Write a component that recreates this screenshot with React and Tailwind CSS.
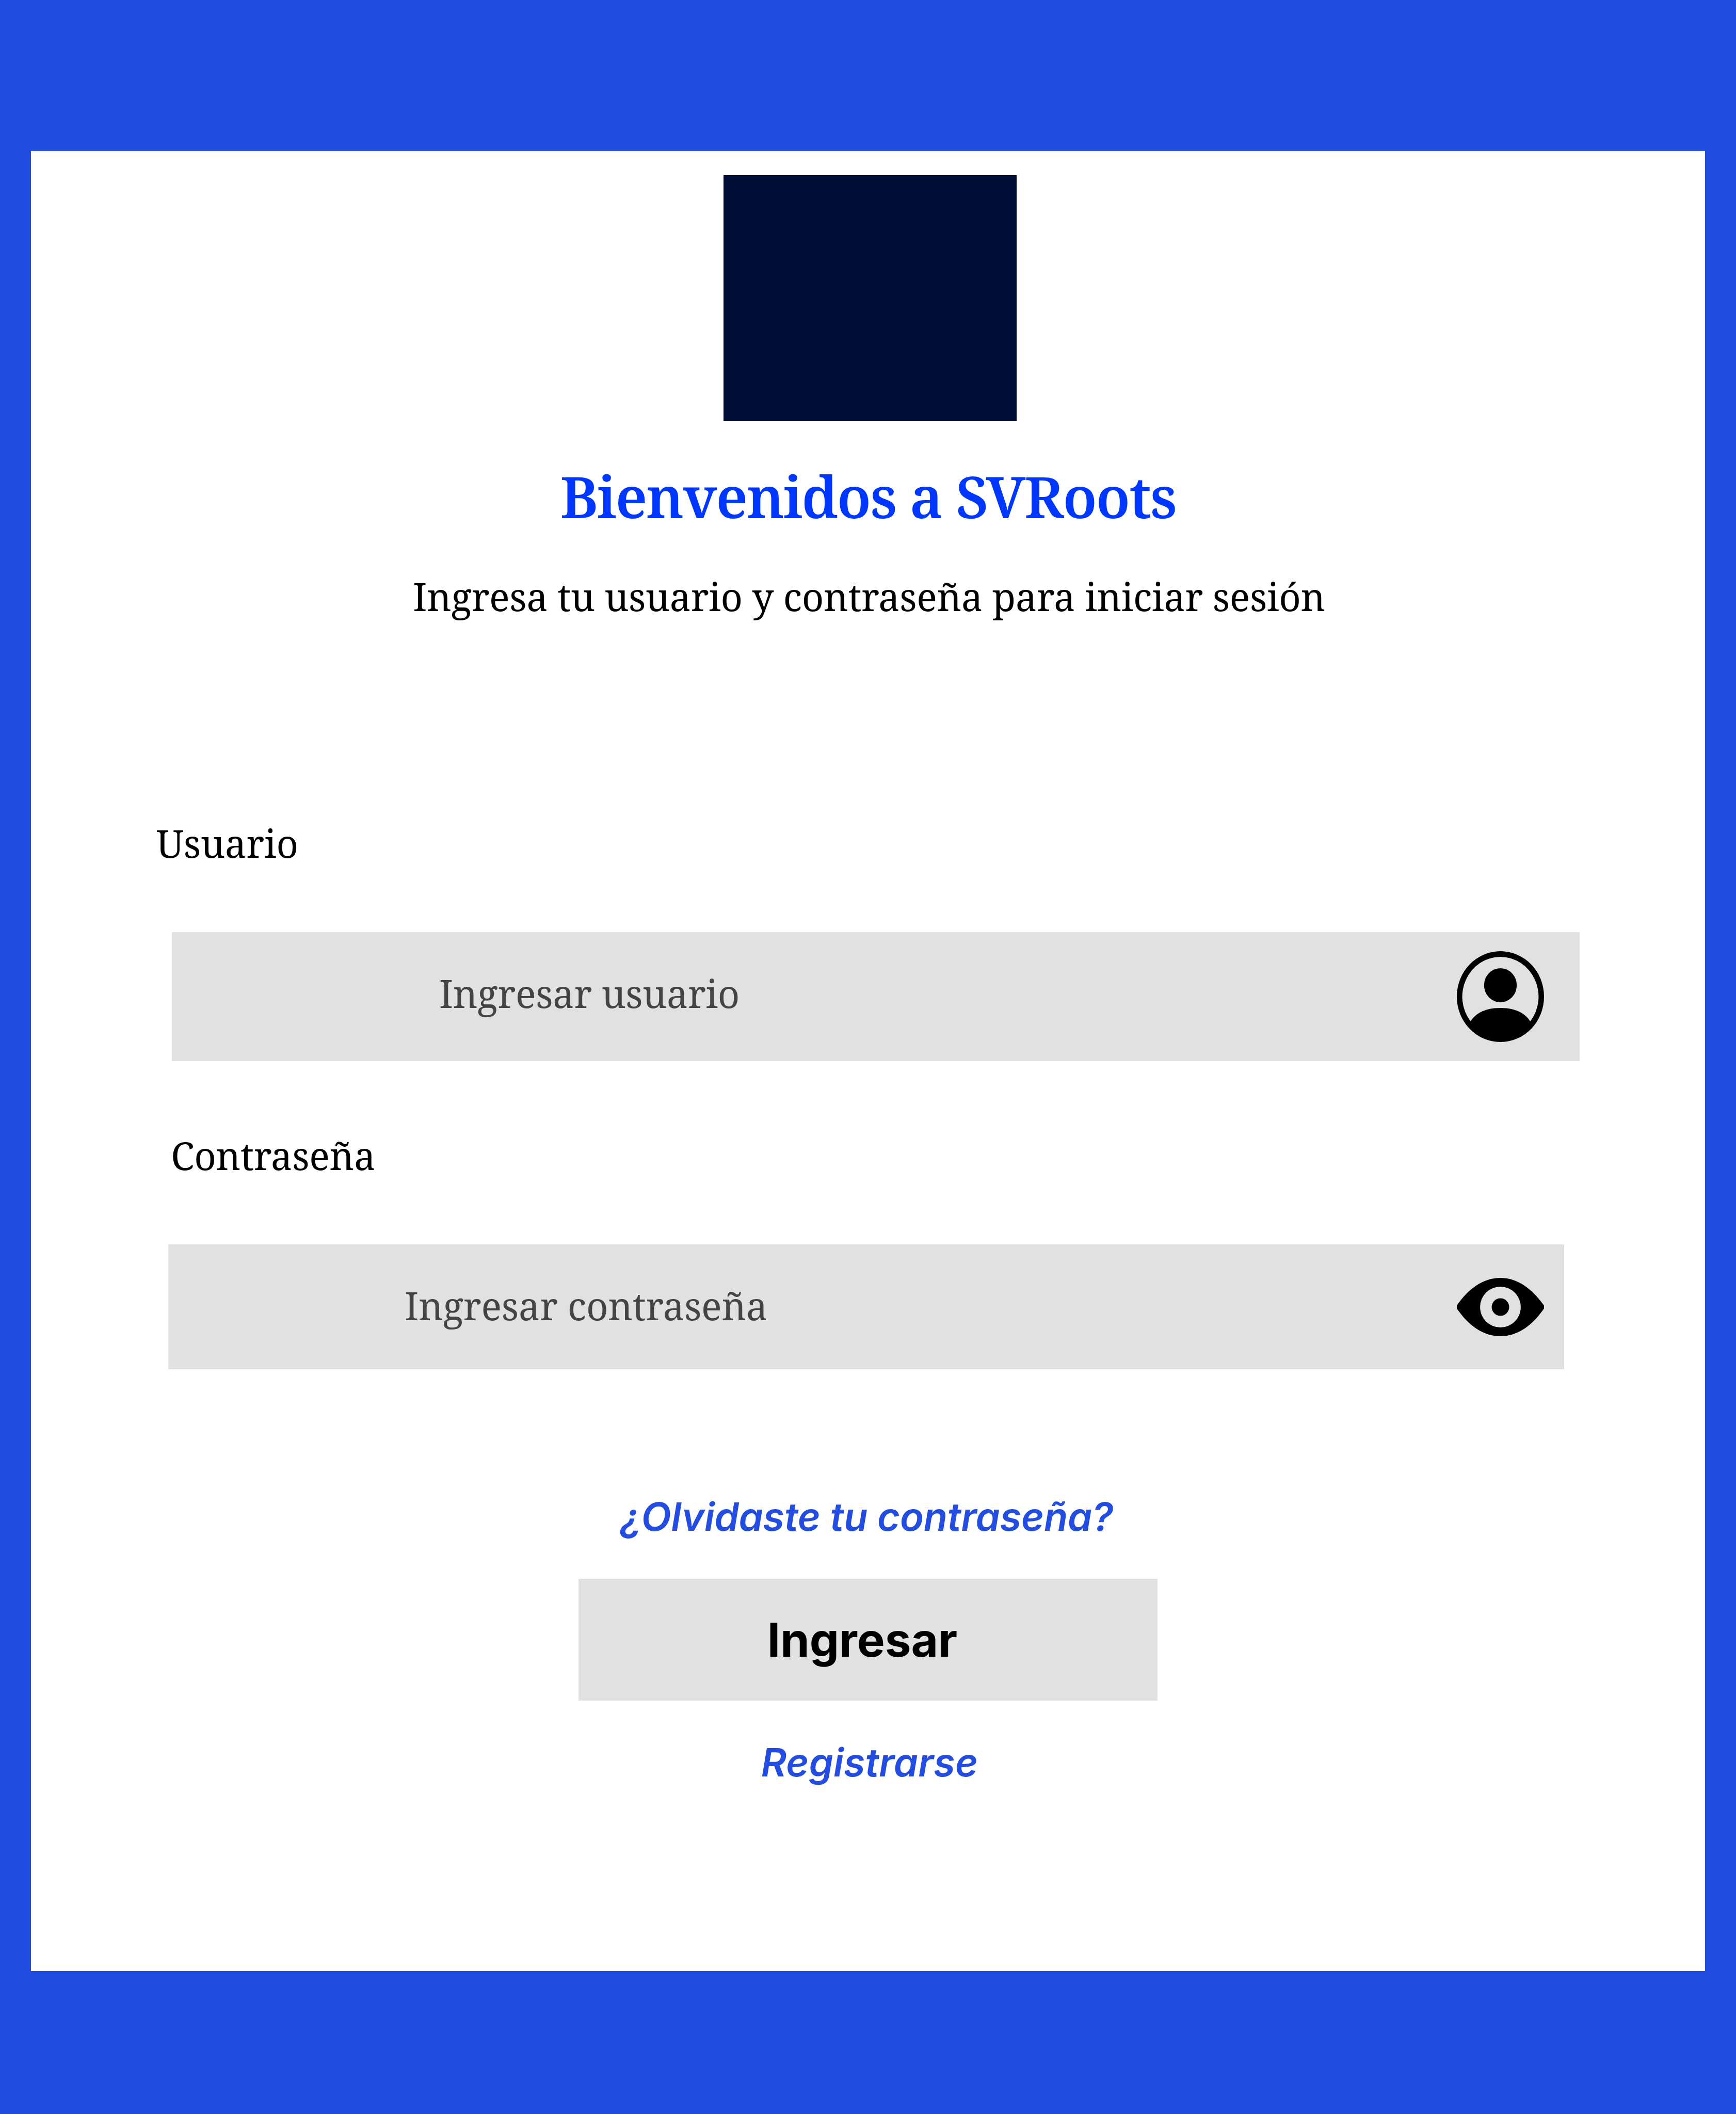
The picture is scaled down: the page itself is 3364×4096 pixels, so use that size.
const serif = "font-['Noto_Serif','DejaVu_Serif_Condensed','DejaVu_Serif',serif]";

function UserIcon() {
  return (
    <svg className="h-[176px] w-[169px] shrink-0" viewBox="0 0 16 16" preserveAspectRatio="none" fill="black" aria-hidden="true">
      <path d="M11 6a3 3 0 1 1-6 0 3 3 0 0 1 6 0z" />
      <path
        fillRule="evenodd"
        d="M0 8a8 8 0 1 1 16 0A8 8 0 0 1 0 8zm8-7a7 7 0 0 0-5.468 11.37C3.242 11.226 4.805 10 8 10s4.757 1.225 5.468 2.37A7 7 0 0 0 8 1z"
      />
    </svg>
  );
}

function EyeIcon() {
  return (
    <svg className="h-[113px] w-[169px] shrink-0" viewBox="0 0 669 447" preserveAspectRatio="none" fill="black" aria-hidden="true">
      <path
        fillRule="evenodd"
        d="M0 212C90 80 205 0 334.500 0S575 80 669 212V234C579 367 464 447 334.500 447S90 367 0 234ZM334.500 67a156 156.500 0 1 0 0 313a156 156.500 0 1 0 0-313Z"
      />
      <circle cx="334.5" cy="223.500" r="67" />
    </svg>
  );
}

export default function App() {
  return (
    <div className="flex h-[4096px] w-[3364px] bg-[#234de1] pl-[60px] pt-[293px]">
      <main className={`flex h-[3526px] w-[3244px] flex-col items-center bg-white pt-[46px] text-[74px] leading-[100px] text-black ${serif}`}>
        <div className="ml-[1342px] h-[477px] w-[568px] shrink-0 self-start bg-[#000d37]" />

        <h1 className="mt-[75px] whitespace-nowrap text-[111px] font-semibold leading-[140px] tracking-[-2.2px] text-[#0037ff]">
          Bienvenidos a SVRoots
        </h1>
        <p className="mt-[75px] whitespace-nowrap pl-[4px] tracking-[-0.41px]">
          Ingresa tu usuario y contraseña para iniciar sesión
        </p>

        <label className="ml-[243px] mt-[378px] self-start tracking-[-0.2px]">Usuario</label>
        <div className="ml-[273px] mt-[122px] flex h-[250px] w-[2728px] shrink-0 items-center justify-between self-start bg-[#e1e1e1] pl-[518px] pr-[69px]">
          <span className="pb-[12px] tracking-[-0.4px] text-[#444444]">Ingresar usuario</span>
          <UserIcon />
        </div>

        <label className="ml-[271px] mt-[133px] self-start tracking-[-0.3px]">Contraseña</label>
        <div className="ml-[266px] mt-[122px] flex h-[242px] w-[2705px] shrink-0 items-center justify-between self-start bg-[#e1e1e1] pl-[458px] pr-[39px]">
          <span className="pb-[4px] tracking-[-0.28px] text-[#444444]">Ingresar contraseña</span>
          <EyeIcon />
        </div>

        <a className="mt-[236px] whitespace-nowrap pr-[5px] font-['Inter',sans-serif] text-[75.6px] font-semibold italic tracking-[-0.2px] text-[#234de1]">
          ¿Olvidaste tu contraseña?
        </a>
        <button className="mt-[70px] flex h-[236px] w-[1122px] shrink-0 items-center justify-center bg-[#e1e1e1] pr-[22px] font-['Inter',sans-serif] text-[90.7px] font-bold">
          Ingresar
        </button>
        <a className="mt-[70px] pl-[6px] font-['Inter',sans-serif] text-[75.6px] font-semibold italic tracking-[0.1px] text-[#234de1]">
          Registrarse
        </a>
      </main>
    </div>
  );
}
